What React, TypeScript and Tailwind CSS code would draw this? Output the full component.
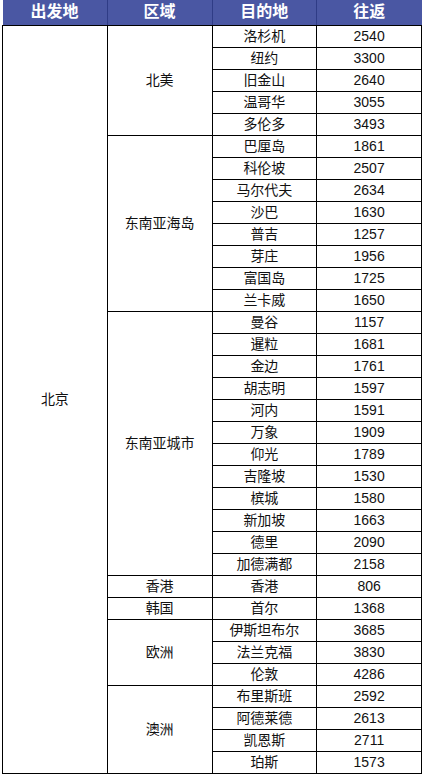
import React from "react";

type Group = { region: string; items: [string, string][] };

const groups: Group[] = [
  { region: "北美", items: [["洛杉机", "2540"], ["纽约", "3300"], ["旧金山", "2640"], ["温哥华", "3055"], ["多伦多", "3493"]] },
  { region: "东南亚海岛", items: [["巴厘岛", "1861"], ["科伦坡", "2507"], ["马尔代夫", "2634"], ["沙巴", "1630"], ["普吉", "1257"], ["芽庄", "1956"], ["富国岛", "1725"], ["兰卡威", "1650"]] },
  { region: "东南亚城市", items: [["曼谷", "1157"], ["暹粒", "1681"], ["金边", "1761"], ["胡志明", "1597"], ["河内", "1591"], ["万象", "1909"], ["仰光", "1789"], ["吉隆坡", "1530"], ["槟城", "1580"], ["新加坡", "1663"], ["德里", "2090"], ["加德满都", "2158"]] },
  { region: "香港", items: [["香港", "806"]] },
  { region: "韩国", items: [["首尔", "1368"]] },
  { region: "欧洲", items: [["伊斯坦布尔", "3685"], ["法兰克福", "3830"], ["伦敦", "4286"]] },
  { region: "澳洲", items: [["布里斯班", "2592"], ["阿德莱德", "2613"], ["凯恩斯", "2711"], ["珀斯", "1573"]] },
];

const total = groups.reduce((s, g) => s + g.items.length, 0);

export default function App() {
  const cjk = "font-['Liberation_Sans','Noto_Sans_CJK_SC',sans-serif]";
  const cell = "border border-black text-center align-middle p-0 text-[14px] leading-none text-[#111]";
  const rows: React.ReactNode[] = [];
  let first = true;
  groups.forEach((g) => {
    g.items.forEach(([dest, price], i) => {
      rows.push(
        <tr key={g.region + dest} className="h-[22px]">
          {first && (
            <td rowSpan={total} className={cell}>
              北京
            </td>
          )}
          {i === 0 && (
            <td rowSpan={g.items.length} className={cell}>
              {g.region}
            </td>
          )}
          <td className={cell}>{dest}</td>
          <td className={cell}>{price}</td>
        </tr>
      );
      first = false;
    });
  });

  return (
    <div className={`w-[423px] bg-white ${cjk}`}>
      <table className="ml-[2px] w-[420px] table-fixed border-collapse">
        <thead>
          <tr className="h-[25px] bg-[#4a57a3]">
            {["出发地", "区域", "目的地", "往返"].map((h, i) => (
              <th
                key={h}
                className={`border-b border-b-black border-x border-x-[#2f3c86] p-0 text-center align-middle text-[16px] font-bold leading-none text-white ${i === 0 ? "border-l-0" : ""} ${i === 3 ? "border-r-0" : ""}`}
              >
                {h}
              </th>
            ))}
          </tr>
        </thead>
        <tbody>{rows}</tbody>
      </table>
    </div>
  );
}
